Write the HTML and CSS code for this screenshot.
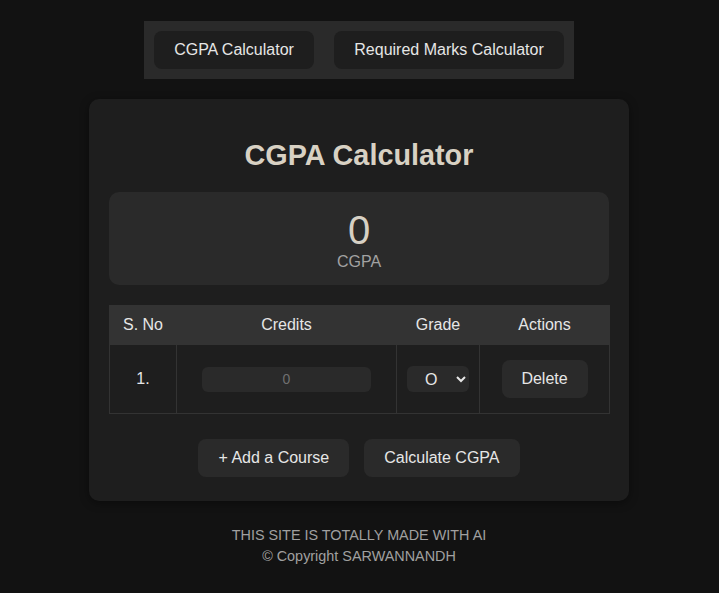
FILE: index.html
```html
<!DOCTYPE html>
<html lang="en">
<head>
<meta charset="utf-8">
<title>CGPA Calculator</title>
<link rel="stylesheet" href="styles.css">
</head>
<body>
  <nav class="nav">
    <button class="nav-btn nav-btn-cgpa">CGPA Calculator</button>
    <button class="nav-btn nav-btn-marks">Required Marks Calculator</button>
  </nav>

  <main class="card">
    <h1 class="title">CGPA Calculator</h1>
    <div class="result">
      <div class="result-value">0</div>
      <div class="result-label">CGPA</div>
    </div>

    <table class="courses">
      <thead>
        <tr>
          <th class="col-sno">S. No</th>
          <th class="col-credits">Credits</th>
          <th class="col-grade">Grade</th>
          <th class="col-actions">Actions</th>
        </tr>
      </thead>
      <tbody>
        <tr>
          <td>1.</td>
          <td><input class="credit-input" type="number" placeholder="0"></td>
          <td>
            <select class="grade-select">
              <option>O</option>
              <option>A+</option>
              <option>A</option>
              <option>B+</option>
              <option>B</option>
              <option>C</option>
            </select>
          </td>
          <td><button class="btn btn-delete">Delete</button></td>
        </tr>
      </tbody>
    </table>

    <div class="actions">
      <button class="btn">+ Add a Course</button>
      <button class="btn">Calculate CGPA</button>
    </div>
  </main>

  <footer class="footer">
    <div>THIS SITE IS TOTALLY MADE WITH AI</div>
    <div>© Copyright SARWANNANDH</div>
  </footer>
</body>
</html>
```

FILE: styles.css
```css
* { box-sizing: border-box; }

html, body {
  margin: 0;
  background: #121212;
}

body {
  font-family: "Liberation Sans", Arial, sans-serif;
  color: #e0e0e0;
  padding: 21px 1px 0 0;
  display: flex;
  flex-direction: column;
  align-items: center;
}

button, input, select {
  font-family: inherit;
}

.nav {
  display: flex;
  gap: 20px;
  padding: 10px;
  background: #2a2a2a;
}

.nav-btn {
  height: 38px;
  padding: 0;
  background: #1e1e1e;
  color: #e6e6e6;
  border: none;
  border-radius: 8px;
  font-size: 16px;
}

.nav-btn-cgpa { width: 160px; }
.nav-btn-marks { width: 230px; }

.card {
  width: 540px;
  margin-top: 20px;
  padding: 20px 20px 24px;
  background: #1e1e1e;
  border-radius: 10px;
  box-shadow: 0 2px 10px rgba(0, 0, 0, 0.4);
}

.title {
  margin: 20px 0 21px;
  font-size: 28.8px;
  line-height: 32px;
  font-weight: bold;
  text-align: center;
  color: #d8d1c3;
}

.result {
  background: #2a2a2a;
  border-radius: 10px;
  padding: 15px 0 15px;
  text-align: center;
}

.result-value {
  font-size: 40px;
  line-height: 46px;
  color: #d6d0c4;
}

.result-label {
  font-size: 16px;
  line-height: 17px;
  color: #a2a2a2;
}

.courses {
  width: 500px;
  margin-top: 20px;
  border-collapse: collapse;
  table-layout: fixed;
}

.courses th {
  height: 39px;
  background: #333333;
  font-weight: normal;
  font-size: 16px;
  color: #e6e6e6;
  border: 1px solid #333333;
}

.courses td {
  height: 69px;
  text-align: center;
  font-size: 16px;
  color: #e6e6e6;
  border: 1px solid #333333;
}

.col-sno { width: 67px; }
.col-credits { width: 220px; }
.col-grade { width: 83px; }
.col-actions { width: 130px; }

.credit-input {
  width: 169px;
  height: 25px;
  background: #2a2a2a;
  border: none;
  border-radius: 6px;
  color: #e6e6e6;
  text-align: center;
  font-size: 14px;
  outline: none;
  -moz-appearance: textfield;
}

.credit-input::placeholder { color: #707070; }
.credit-input::-webkit-inner-spin-button,
.credit-input::-webkit-outer-spin-button {
  -webkit-appearance: none;
  margin: 0;
}

.grade-select {
  width: 62px;
  height: 26px;
  padding: 0 4px 0 14px;
  background-color: #2a2a2a;
  color: #e6e6e6;
  border: none;
  border-radius: 6px;
  font-size: 16px;
  color-scheme: dark;
}

.btn {
  height: 38px;
  padding: 0 20px;
  background: #2a2a2a;
  color: #e6e6e6;
  border: none;
  border-radius: 8px;
  font-size: 16px;
}

.btn-delete {
  width: 86px;
  padding: 0;
}

.actions {
  display: flex;
  justify-content: center;
  gap: 15px;
  margin-top: 25px;
}

.footer {
  margin-top: 24px;
  text-align: center;
  font-size: 14.4px;
  line-height: 21px;
  color: #a0a0a0;
}
```
